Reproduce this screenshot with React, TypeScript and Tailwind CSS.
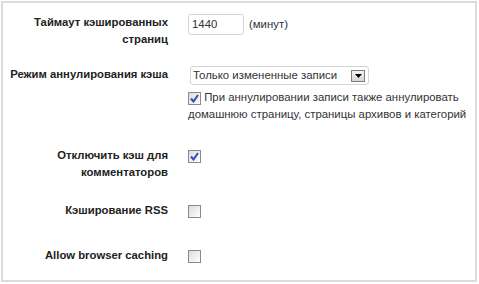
const Check = ({ checked }: { checked?: boolean }) => (
  <span className="inline-flex w-[13px] h-[13px] border border-[#8a8a8a] bg-gradient-to-br from-[#dcdcdc] to-[#ffffff] items-center justify-center align-[-2px]">
    {checked && (
      <svg width="9" height="9" viewBox="0 0 9 9">
        <path d="M1 4.5 L3.5 7.5 L8 1" fill="none" stroke="#2d4fb8" strokeWidth="2" />
      </svg>
    )}
  </span>
);

const Label = ({ children }: { children: React.ReactNode }) => (
  <div className="w-[165px] shrink-0 text-right font-bold text-[11.3px] leading-[17px] text-[#222]">
    {children}
  </div>
);

export default function App() {
  return (
    <div className="bg-white w-[479px] h-[284px] pt-px pl-px font-['Liberation_Sans',Arial,sans-serif] text-[11.4px] text-[#333]">
      <div className="w-[476px] h-[281px] border-2 border-[#dcdcdc]">
        {/* cache timeout */}
        <div className="flex gap-5 mt-[11px]">
          <Label>
            Таймаут кэшированных
            <br />
            страниц
          </Label>
          <div className="flex items-center h-[21px] gap-[5px]">
            <div className="w-[56px] h-[21px] border border-[#d4d4d4] rounded-[3px] pl-[3px] leading-[19px]">
              1440
            </div>
            <span>(минут)</span>
          </div>
        </div>

        {/* invalidation mode */}
        <div className="flex gap-5 mt-[18px]">
          <Label>Режим аннулирования кэша</Label>
          <div className="w-[285px]">
            <div className="ml-[2px] w-[179px] h-[19px] border border-[#d4d4d4] rounded-[3px] flex items-center justify-between pl-[2px] pr-[3px]">
              <span className="leading-[17px]">Только измененные записи</span>
              <span className="w-[14px] h-[12px] border border-[#7f7f7f] bg-gradient-to-b from-[#f4f4f4] to-[#d6d6d6] flex items-center justify-center">
                <svg width="7" height="4" viewBox="0 0 7 4">
                  <path d="M0 0 H7 L3.5 4 Z" fill="#000" />
                </svg>
              </span>
            </div>
            <p className="mt-[4px] leading-[17px]">
              <Check checked /> При аннулировании записи также аннулировать домашнюю страницу, страницы архивов и категорий
            </p>
          </div>
        </div>

        {/* commenters */}
        <div className="flex gap-5 mt-[24px]">
          <Label>
            Отключить кэш для
            <br />
            комментаторов
          </Label>
          <div>
            <Check checked />
          </div>
        </div>

        {/* rss */}
        <div className="flex gap-5 mt-[21px]">
          <Label>Кэширование RSS</Label>
          <div className="pt-[2px]">
            <Check />
          </div>
        </div>

        {/* browser caching */}
        <div className="flex gap-5 mt-[26px]">
          <Label>Allow browser caching</Label>
          <div className="pt-[2px]">
            <Check />
          </div>
        </div>
      </div>
    </div>
  );
}
